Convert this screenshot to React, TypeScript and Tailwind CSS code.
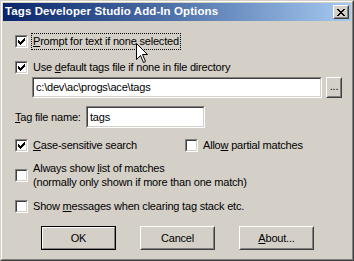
import React from "react";

const font = { fontFamily: '"Liberation Sans", Arial, sans-serif' };

function Check() {
  return (
    <svg width="7" height="7" viewBox="0 0 7 7" shapeRendering="crispEdges">
      <rect x="0" y="2" width="1" height="3" fill="#000" />
      <rect x="1" y="3" width="1" height="3" fill="#000" />
      <rect x="2" y="4" width="1" height="3" fill="#000" />
      <rect x="3" y="3" width="1" height="3" fill="#000" />
      <rect x="4" y="2" width="1" height="3" fill="#000" />
      <rect x="5" y="1" width="1" height="3" fill="#000" />
      <rect x="6" y="0" width="1" height="3" fill="#000" />
    </svg>
  );
}

function CheckBox({ checked }: { checked?: boolean }) {
  return (
    <div className="w-[13px] h-[13px] shrink-0 border border-t-[#808080] border-l-[#808080] border-b-white border-r-white">
      <div className="w-full h-full border border-t-[#404040] border-l-[#404040] border-b-[#d4d0c8] border-r-[#d4d0c8] bg-white flex items-center justify-center">
        {checked ? <Check /> : null}
      </div>
    </div>
  );
}

function Sunken({ className, children }: { className: string; children?: React.ReactNode }) {
  return (
    <div className={"border border-t-[#808080] border-l-[#808080] border-b-white border-r-white " + className}>
      <div className="w-full h-full border border-t-[#404040] border-l-[#404040] border-b-[#d4d0c8] border-r-[#d4d0c8] bg-white flex items-center pl-[2px] text-black">
        {children}
      </div>
    </div>
  );
}

function Button({ children, def, className }: { children: React.ReactNode; def?: boolean; className: string }) {
  const inner = (
    <div className="w-full h-full border border-t-white border-l-white border-b-[#404040] border-r-[#404040]">
      <div className="w-full h-full border border-t-[#d4d0c8] border-l-[#d4d0c8] border-b-[#808080] border-r-[#808080] flex items-center justify-center">
        {children}
      </div>
    </div>
  );
  if (def) {
    return (
      <div className={"border border-black " + className}>
        <div className="w-full h-full border border-t-white border-l-white border-b-[#808080] border-r-[#808080]">
          <div className="w-full h-full flex items-center justify-center">{children}</div>
        </div>
      </div>
    );
  }
  return <div className={className}>{inner}</div>;
}

function Row({
  checked,
  focus,
  children,
  className,
}: {
  checked?: boolean;
  focus?: boolean;
  children: React.ReactNode;
  className?: string;
}) {
  return (
    <div className={"flex items-center gap-[3px] " + (className || "")}>
      <CheckBox checked={checked} />
      <div
        className={
          "h-[17px] flex items-center px-[1px] border " +
          (focus ? "border-dotted border-black" : "border-transparent")
        }
      >
        {children}
      </div>
    </div>
  );
}

export default function App() {
  return (
    <div
      className="w-[354px] h-[261px] border border-t-[#d4d0c8] border-l-[#d4d0c8] border-b-[#404040] border-r-[#404040] text-[11px] tracking-[-0.2px] text-black relative overflow-hidden"
      style={font}
    >
      <div className="w-full h-full border border-t-white border-l-white border-b-[#808080] border-r-[#808080] bg-[#d4d0c8] p-[1px] flex flex-col">
        <div className="h-[18px] shrink-0 bg-gradient-to-r from-[#0a246a] to-[#a6caf0] flex items-center justify-between pl-[2px] pr-[2px]">
          <span className="text-white font-bold text-[11.5px] tracking-[0.1px]">Tags Developer Studio Add-In Options</span>
          <div className="w-[16px] h-[14px] border border-t-white border-l-white border-b-[#404040] border-r-[#404040]">
            <div className="w-full h-full border border-t-[#d4d0c8] border-l-[#d4d0c8] border-b-[#808080] border-r-[#808080] bg-[#d4d0c8] flex items-center justify-center">
              <svg width="8" height="7" viewBox="0 0 8 7" shapeRendering="crispEdges">
                <path d="M0 0h2v1h-2zM6 0h2v1h-2zM1 1h2v1h-2zM5 1h2v1h-2zM2 2h4v1h-4zM3 3h2v1h-2zM2 4h4v1h-4zM1 5h2v1h-2zM5 5h2v1h-2zM0 6h2v1h-2zM6 6h2v1h-2z" fill="#000" />
              </svg>
            </div>
          </div>
        </div>

        <div className="flex flex-col pl-[12px]">
          <Row checked focus className="mt-[12px]">
            <span><u>P</u>rompt for text if none selected</span>
          </Row>
          <Row checked className="mt-[9px]">
            <span>Use <u>d</u>efault tags file if none in file directory</span>
          </Row>
          <div className="flex items-center mt-[1px] pl-[17px]">
            <Sunken className="w-[290px] h-[21px]">
              <span>c:\dev\ac\progs\ace\tags</span>
            </Sunken>
            <Button className="w-[16px] h-[21px] ml-[4px]">
              <span className="leading-none pb-[2px]">...</span>
            </Button>
          </div>
          <div className="flex items-center mt-[8px]">
            <span className="w-[71px]"><u>T</u>ag file name:</span>
            <Sunken className="w-[119px] h-[22px]">
              <span>tags</span>
            </Sunken>
          </div>
          <div className="flex items-center mt-[9px]">
            <div className="w-[170px]">
              <Row checked>
                <span><u>C</u>ase-sensitive search</span>
              </Row>
            </div>
            <Row>
              <span>Allo<u>w</u> partial matches</span>
            </Row>
          </div>
          <div className="flex items-center gap-[3px] mt-[6px]">
            <CheckBox />
            <div className="flex flex-col leading-[14px] px-[1px] border border-transparent">
              <span>Always show <u>l</u>ist of matches</span>
              <span>(normally only shown if more than one match)</span>
            </div>
          </div>
          <Row className="mt-[8px]">
            <span>Show <u>m</u>essages when clearing tag stack etc.</span>
          </Row>
        </div>

        <div className="flex gap-[24px] pl-[38px] mt-[11px]">
          <Button def className="w-[75px] h-[24px]">
            <span>OK</span>
          </Button>
          <Button className="w-[75px] h-[24px]">
            <span>Cancel</span>
          </Button>
          <Button className="w-[75px] h-[24px]">
            <span><u>A</u>bout...</span>
          </Button>
        </div>
      </div>

      <svg className="absolute left-[135px] top-[42px]" width="13" height="21" viewBox="0 0 13 21">
        <polygon
          points="0.5,0.5 0.5,16.5 4.5,12.5 7.5,19.5 9.5,18.5 6.5,11.5 11.5,11.5"
          fill="#fff"
          stroke="#000"
          strokeWidth="1"
          strokeLinejoin="miter"
        />
      </svg>
    </div>
  );
}
